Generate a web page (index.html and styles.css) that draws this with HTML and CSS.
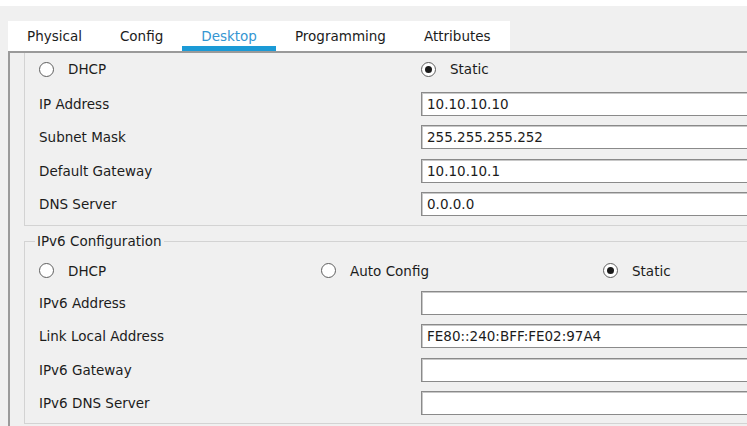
FILE: index.html
```html
<!DOCTYPE html>
<html>
<head>
<meta charset="utf-8">
<link rel="stylesheet" href="styles.css">
</head>
<body>
<div class="top"></div>
<div class="tabs">
  <div class="tab">Physical</div>
  <div class="tab">Config</div>
  <div class="tab active">Desktop</div>
  <div class="tab">Programming</div>
  <div class="tab">Attributes</div>
</div>
<div class="panel">
  <div class="v4">
    <div class="radios two">
      <div class="rcell"><span class="radio"></span>DHCP</div>
      <div class="rcell"><span class="radio on"></span>Static</div>
    </div>
    <div class="grid">
      <div class="label">IP Address</div><div class="field">10.10.10.10</div>
      <div class="label">Subnet Mask</div><div class="field">255.255.255.252</div>
      <div class="label">Default Gateway</div><div class="field">10.10.10.1</div>
      <div class="label">DNS Server</div><div class="field">0.0.0.0</div>
    </div>
  </div>
  <div class="v6">
    <div class="legend">IPv6 Configuration</div>
    <div class="radios three">
      <div class="rcell"><span class="radio"></span>DHCP</div>
      <div class="rcell"><span class="radio"></span>Auto Config</div>
      <div class="rcell"><span class="radio on"></span>Static</div>
    </div>
    <div class="grid">
      <div class="label">IPv6 Address</div><div class="field"></div>
      <div class="label">Link Local Address</div><div class="field">FE80::240:BFF:FE02:97A4</div>
      <div class="label">IPv6 Gateway</div><div class="field"></div>
      <div class="label">IPv6 DNS Server</div><div class="field"></div>
    </div>
  </div>
</div>
</body>
</html>
```
FILE: styles.css
```css
html, body {
  margin: 0;
  width: 747px;
  height: 426px;
  overflow: hidden;
}
body {
  background: #f0f0f0;
  font-family: "DejaVu Sans", sans-serif;
  font-size: 13.5px;
  color: #1c1c1c;
}
.top {
  height: 6px;
  background: #fff;
}
.tabs {
  display: flex;
  margin: 15px 0 0 8px;
  width: fit-content;
  background: #fff;
  height: 30px;
}
.tab {
  padding: 0 19px;
  line-height: 30px;
  white-space: nowrap;
}
.tab.active {
  color: #3596d2;
  box-shadow: inset 0 -5px 0 #1b9ad6;
}
.panel {
  margin-left: 8px;
  height: 373px;
  overflow: hidden;
  border-top: 2px solid #9a9a9a;
  border-left: 2px solid #9a9a9a;
}
.v4 {
  margin-left: 14px;
  border-left: 1px solid #d3d3d3;
  border-bottom: 1px solid #d3d3d3;
  padding: 4px 0 9px 14px;
}
.v6 {
  margin: 15px 0 0 14px;
  border: 1px solid #d3d3d3;
  border-right: none;
  padding: 0 0 8px 14px;
}
.legend {
  margin: -9px 0 0 -4px;
  padding: 0 2px;
  width: fit-content;
  line-height: 16px;
  background: #f0f0f0;
}
.radios {
  display: flex;
  height: 24px;
  align-items: center;
}
.two {
  margin-bottom: 11px;
}
.two .rcell:first-child {
  width: 382px;
}
.three {
  margin: 10px 0 8px;
}
.three .rcell {
  width: 282px;
}
.rcell {
  display: flex;
  flex-shrink: 0;
  align-items: center;
  white-space: nowrap;
}
.radio {
  display: inline-flex;
  align-items: center;
  justify-content: center;
  width: 13px;
  height: 13px;
  border: 1px solid #5e5e5e;
  border-radius: 50%;
  background: #fff;
  margin-right: 14px;
}
.radio.on::after {
  content: "";
  width: 7px;
  height: 7px;
  border-radius: 50%;
  background: #1a1a1a;
}
.grid {
  display: grid;
  grid-template-columns: 382px 1fr;
  grid-auto-rows: 24px;
  row-gap: 9.33px;
}
.label {
  line-height: 24px;
  white-space: nowrap;
}
.field {
  box-sizing: border-box;
  height: 24px;
  border: 1px solid #8a8a8a;
  border-right: none;
  box-shadow: inset 1px 1px 0 #c8c8c8;
  background: #fff;
  padding-left: 5px;
  line-height: 22px;
  white-space: nowrap;
}
```
